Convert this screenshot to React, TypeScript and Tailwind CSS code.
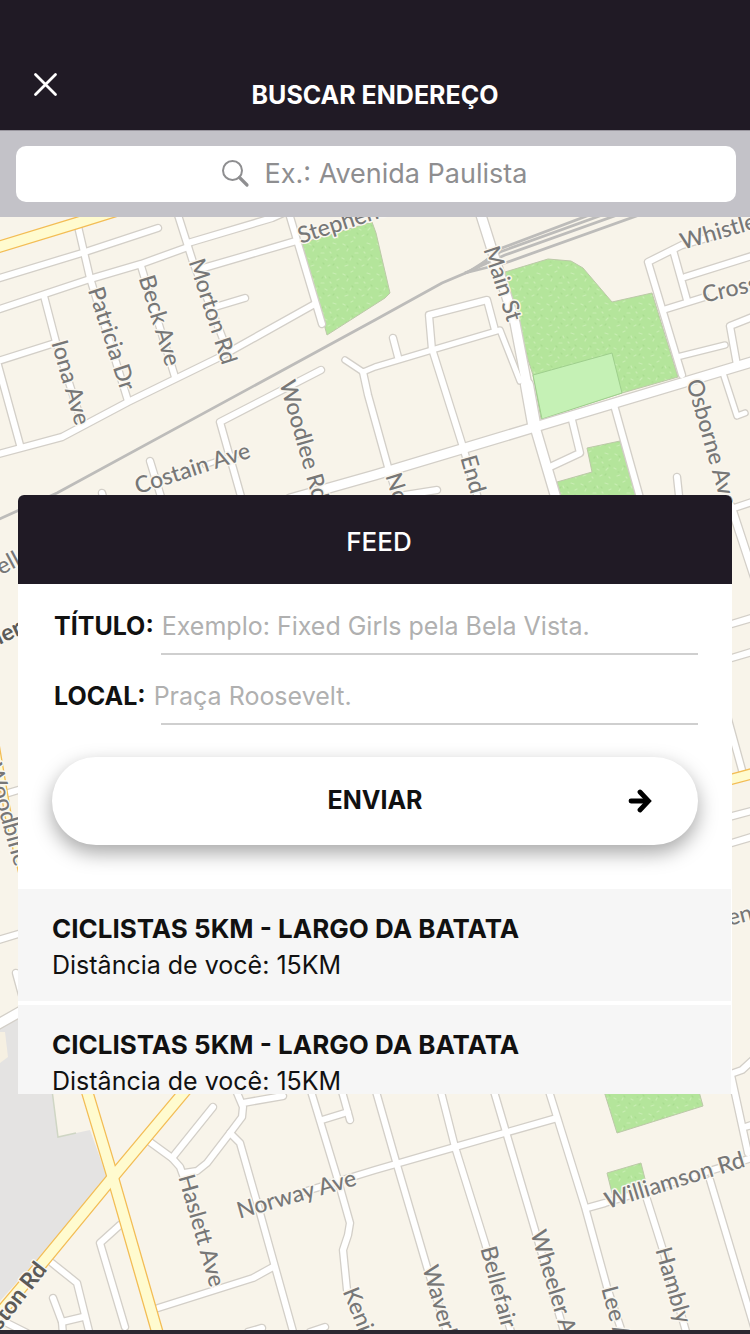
import React from "react";

type Road = { d: string; w?: number };

const ROADS: Road[] = [
  { d: "M0 278L82 253L158 228" },
  { d: "M0 309L90 279L141 264L188 247" },
  { d: "M188 243L272 218L290 210" },
  { d: "M200 269L296 241" },
  { d: "M77 222L90 278L128 401" },
  { d: "M141 266L175 377" },
  { d: "M178 215L193 262L228 352" },
  { d: "M215 307L245 298" },
  { d: "M288 210L322 324" },
  { d: "M-5 455L62 437L128 402L220 357L313 305" },
  { d: "M44 296L56 342L82 423" },
  { d: "M-5 362L55 343" },
  { d: "M-2 365L20 445" },
  { d: "M321 370L220 422L242 500" },
  { d: "M205 465L238 454", w: 4 },
  { d: "M150 461L162 500" },
  { d: "M102 493L104 500" },
  { d: "M345 360L363 372L375 367L432 350L500 330L520 381", w: 5 },
  { d: "M432 350L429 315L487 300L495 330" },
  { d: "M393 338L398 357" },
  { d: "M363 372L368 395L388 467L400 505" },
  { d: "M433 352L463 447L480 505" },
  { d: "M290 499L375 475L535 427L755 361", w: 9 },
  { d: "M480 212L493 253L515 323L535 427L558 505", w: 9 },
  { d: "M527 385L534 424", w: 12 },
  { d: "M572 420L580 453L550 467" },
  { d: "M614 405L642 505" },
  { d: "M682 375L648 262L682 245L720 234" },
  { d: "M673 250L687 300" },
  { d: "M685 277L755 255" },
  { d: "M663 310L705 297" },
  { d: "M677 357L725 345", w: 5 },
  { d: "M737 365L730 326L755 316" },
  { d: "M723 373L737 416L745 413", w: 5 },
  { d: "M677 477L680 505" },
  { d: "M405 495L437 490" },
  { d: "M725 511L755 501" },
  { d: "M731 506L757 585", w: 7 },
  { d: "M725 626L755 617" },
  { d: "M725 660L755 651" },
  { d: "M726 712L742 770" },
  { d: "M725 818L755 810" },
  { d: "M725 845L755 836" },
  { d: "M725 1076L742 1070L755 1058" },
  { d: "M731 1075L748 1153" },
  { d: "M745 1127L755 1124" },
  { d: "M-5 797L25 788" },
  { d: "M-5 941L25 932" },
  { d: "M16 973L22 995" },
  { d: "M-5 1026L25 1009", w: 9 },
  { d: "M150 1142L172 1158L180 1167L184 1178" },
  { d: "M172 1158L213 1107" },
  { d: "M184 1173L197 1171L207 1163L230 1133L242 1117L243 1107L235 1088" },
  { d: "M243 1103L283 1096" },
  { d: "M230 1133L240 1143L260 1213L294 1335" },
  { d: "M158 1308L253 1278L273 1267" },
  { d: "M120 1225L100 1243L125 1327" },
  { d: "M52 1263L77 1283L90 1335" },
  { d: "M53 1298L62 1322L83 1317" },
  { d: "M62 1322L63 1335" },
  { d: "M5 1322L27 1333" },
  { d: "M310 1088L337 1177L350 1223L348 1235L343 1250L347 1290" },
  { d: "M322 1120L348 1112M341 1088L350 1120" },
  { d: "M300 1193L375 1170L455 1147L557 1118" },
  { d: "M375 1088L397 1165L427 1267L448 1335" },
  { d: "M440 1088L455 1147L485 1243L512 1335" },
  { d: "M493 1088L535 1230L565 1335" },
  { d: "M548 1088L585 1207L607 1287L623 1335" },
  { d: "M587 1208L605 1203L755 1157" },
  { d: "M644 1190L662 1247L687 1335" },
  { d: "M710 1180L755 1330" },
  { d: "M248 1332L262 1328M310 1332L325 1327" },
];

const HIGHWAYS: Road[] = [
  { d: "M-5 248L77 223L125 208", w: 10 },
  { d: "M86 1088L113 1178L159 1338", w: 10 },
  { d: "M190 1085L113 1177L43 1262L-5 1319", w: 10 },
  { d: "M725 781L755 773", w: 9 },
  { d: "M-4 745L8 815L26 890", w: 5 },
];

const PARKS = [
  "M302 243L372 222L376 233L390 293L385 298L327 335Z",
  "M505 272L548 259L571 261L583 268L612 302L652 293L678 377L622 393L541 419L533 375L515 320Z",
  "M587 448L620 441L637 500L562 500L557 482L592 472Z",
  "M603 1088L698 1088L703 1106L617 1133Z",
  "M607 1173L641 1163L647 1187L613 1197Z",
];

const RAILS = [
  "M-5 521L57 493L375 320L442 283L475 269L502 248L592 214",
  "M465 273L505 255L620 214",
  "M470 271L500 252L605 214",
  "M465 273L505 263L642 214",
];

type Label = {
  t: string;
  x: number;
  y: number;
  a: number;
  anchor?: "start" | "middle" | "end";
  bold?: boolean;
};

const LABELS: Label[] = [
  { t: "Stephens", x: 299, y: 238, a: -18, anchor: "start" },
  { t: "Iona Ave", x: 69, y: 383, a: 74 },
  { t: "Patricia Dr", x: 110, y: 339, a: 72 },
  { t: "Beck Ave", x: 158, y: 321, a: 73 },
  { t: "Morton Rd", x: 211, y: 312, a: 72 },
  { t: "Costain Ave", x: 193, y: 470, a: -18 },
  { t: "Woodlee Rd", x: 285, y: 381, a: 74, anchor: "start" },
  { t: "No", x: 391, y: 474, a: 73, anchor: "start" },
  { t: "Main St", x: 501, y: 284, a: 72 },
  { t: "End", x: 466, y: 456, a: 74, anchor: "start" },
  { t: "Osborne Ave", x: 692, y: 380, a: 74, anchor: "start" },
  { t: "Whistler", x: 681, y: 244, a: -16, anchor: "start" },
  { t: "Cross", x: 703, y: 297, a: -13, anchor: "start" },
  { t: "Haslett Ave", x: 200, y: 1231, a: 74 },
  { t: "Norway Ave", x: 297, y: 1196, a: -16 },
  { t: "Keni", x: 348, y: 1289, a: 68, anchor: "start" },
  { t: "Waverl", x: 428, y: 1266, a: 74, anchor: "start" },
  { t: "Bellefair", x: 486, y: 1247, a: 75, anchor: "start" },
  { t: "Wheeler A", x: 536, y: 1231, a: 73, anchor: "start" },
  { t: "Lee A", x: 607, y: 1287, a: 75, anchor: "start" },
  { t: "Hambly", x: 661, y: 1248, a: 74, anchor: "start" },
  { t: "Williamson Rd", x: 675, y: 1182, a: -17 },
  { t: "ston Rd", x: 43, y: 1266, a: -52, anchor: "end", bold: true },
  { t: "ell", x: 19, y: 559, a: -28, anchor: "end" },
  { t: "ler", x: 21, y: 628, a: -25, anchor: "end", bold: true },
  { t: "Woodbine", x: 6, y: 815, a: 74 },
  { t: "ens", x: 728, y: 920, a: -14, anchor: "start" },
];

function StreetMap() {
  return (
    <svg
      className="absolute inset-0 h-full w-full"
      viewBox="0 217 750 1113"
      preserveAspectRatio="xMidYMin slice"
      aria-hidden="true"
    >
      <defs>
        <pattern id="grass" width="34" height="30" patternUnits="userSpaceOnUse">
          <rect width="34" height="30" fill="#b4e59b" />
          <path
            d="M3 4l2 1M11 2l2-1M19 6l1 2M27 3l3 1M7 11l1-2M15 13l3 0M24 12l1 1M31 10l2-1M2 18l2 1M10 20l1-2M19 19l2 1M28 20l2-2M5 26l3-1M14 27l1 1M22 26l2-1M31 27l1 1"
            stroke="#c8edb2"
            strokeWidth="1.2"
            strokeLinecap="round"
          />
          <path
            d="M7 6l1 1M16 8l1-1M23 7l1 1M12 16l1 1M6 22l1 0M25 17l1 0M17 23l1 1M27 25l1-1M31 15l1 1"
            stroke="#a9dc90"
            strokeWidth="1.2"
            strokeLinecap="round"
          />
        </pattern>
      </defs>
      <rect x="-400" y="217" width="1550" height="1113" fill="#f8f4ea" />
      <path d="M0 1025L22 1012L22 1088L52 1088L58 1137L90 1130L108 1180L0 1301Z" fill="#e4e3e2" />
      <path d="M0 1032L5 1032L8 1057L0 1063Z" fill="#f6f0e2" />
      <path d="M52 1090L58 1137L76 1133" fill="none" stroke="#cfd6c4" strokeWidth="1.5" />
      {PARKS.map((d) => (
        <path key={d} d={d} fill="url(#grass)" stroke="#bcc9a8" strokeWidth="1" />
      ))}
      <path d="M533 375L612 353L622 393L542 419Z" fill="#c5f1b5" stroke="#9fcf8d" strokeWidth="1" />
      <g fill="none" stroke="#bdbcba" strokeWidth="2.8">
        {RAILS.map((d) => (
          <path key={d} d={d} />
        ))}
      </g>
      <g fill="none" strokeLinecap="round" strokeLinejoin="round">
        {ROADS.map((r) => (
          <path key={r.d} d={r.d} stroke="#d3cfc8" strokeWidth={(r.w ?? 6) + 2.6} />
        ))}
        {ROADS.map((r) => (
          <path key={r.d} d={r.d} stroke="#ffffff" strokeWidth={r.w ?? 6} />
        ))}
        {HIGHWAYS.map((r) => (
          <path key={r.d} d={r.d} stroke="#f3bd55" strokeWidth={(r.w ?? 10) + 2.6} />
        ))}
        {HIGHWAYS.map((r) => (
          <path key={r.d} d={r.d} stroke="#fffbcf" strokeWidth={r.w ?? 10} />
        ))}
      </g>
      <g
        fontFamily="Lato, sans-serif"
        fontSize="23"
        stroke="#faf7f0"
        strokeWidth="3"
        strokeLinejoin="round"
        paintOrder="stroke"
      >
        {LABELS.map((l) => (
          <text
            key={l.t}
            dy="-3"
            textAnchor={l.anchor ?? "middle"}
            dominantBaseline="central"
            fontWeight={l.bold ? 700 : 500}
            fill={l.bold ? "#5c5b58" : "#777777"}
            transform={`translate(${l.x} ${l.y}) rotate(${l.a})`}
          >
            {l.t}
          </text>
        ))}
      </g>
    </svg>
  );
}

function Field({ id, label, placeholder }: { id: string; label: string; placeholder: string }) {
  return (
    <div className="flex h-[70px] flex-col justify-end">
      <div className="flex items-center gap-2 pl-0.5 text-[25px] leading-8 text-[#111111]">
        <label htmlFor={id} className="font-bold">
          {label}
        </label>
        <input
          id={id}
          type="text"
          placeholder={placeholder}
          className="min-w-0 flex-1 bg-transparent outline-none placeholder:text-[#b0b0b0]"
        />
      </div>
      <div className="mt-[11px] ml-[109px] h-0.5 bg-[#cfcfcf]" />
    </div>
  );
}

const EVENTS = [
  { id: 1, title: "CICLISTAS 5KM - LARGO DA BATATA", distance: "15KM" },
  { id: 2, title: "CICLISTAS 5KM - LARGO DA BATATA", distance: "15KM" },
];

export default function App() {
  return (
    <div className="flex min-h-screen flex-col bg-[#f8f4ea] font-['Inter',sans-serif]">
      <header className="grid h-[130px] grid-cols-[1fr_auto_1fr] items-start bg-[#201a25] px-8 pt-[71px] text-white">
        <button type="button" aria-label="Fechar" className="w-7">
          <svg viewBox="0 0 28 28" className="h-7 w-7" fill="none" stroke="currentColor" strokeWidth="2.8" strokeLinecap="round">
            <path d="M3.5 3.5L23.5 23.5M23.5 3.5L3.5 23.5" />
          </svg>
        </button>
        <h1 className="pt-2 text-[25px] leading-8 font-bold">BUSCAR ENDEREÇO</h1>
      </header>

      <div className="border-t border-[#99969e] bg-[#c3c2c8] pt-[15px] pr-3.5 pb-[15px] pl-4">
        <label className="flex h-14 items-center justify-center gap-3.5 rounded-[10px] bg-white pr-1">
          <svg viewBox="0 0 30 30" className="h-[30px] w-[30px] text-[#8e8e90]" fill="none" stroke="currentColor" aria-hidden="true">
            <circle cx="11.5" cy="11.5" r="9.5" strokeWidth="2" />
            <path d="M18.5 18.5L26 26" strokeWidth="3.2" strokeLinecap="round" />
          </svg>
          <input
            type="search"
            aria-label="Buscar endereço"
            placeholder="Ex.: Avenida Paulista"
            className="[field-sizing:content] bg-transparent text-[27px] leading-9 text-[#444444] outline-none placeholder:text-[#8e8e90]"
          />
        </label>
      </div>

      <main className="relative flex-1 overflow-hidden px-[18px] pt-[278px] pb-[236px]">
        <StreetMap />
        <section className="relative overflow-hidden rounded-t-md bg-white">
          <h2 className="bg-[#201a25] pt-[31px] pb-[26px] pl-2 text-center text-[26px] leading-8 font-medium text-white">FEED</h2>
          <form className="px-[34px] pt-px pb-11" onSubmit={(e) => e.preventDefault()}>
            <Field id="titulo" label="TÍTULO:" placeholder="Exemplo: Fixed Girls pela Bela Vista." />
            <Field id="local" label="LOCAL:" placeholder="Praça Roosevelt." />
            <button
              type="submit"
              className="mt-8 grid h-[88px] w-full grid-cols-[1fr_auto_1fr] items-center rounded-full bg-white px-[46px] text-[25px] font-bold text-[#111111] shadow-[0_8px_20px_rgba(0,0,0,0.35)]"
            >
              <span className="col-start-2">ENVIAR</span>
              <svg viewBox="0 0 24 24" className="h-6 w-6 justify-self-end" fill="none" stroke="#000000" strokeWidth="4.8" strokeLinecap="round" strokeLinejoin="miter" aria-hidden="true">
                <path d="M3 12H19" />
                <path d="M12 3L20.5 12L12 21" />
              </svg>
            </button>
          </form>
          <ul className="flex max-h-[205px] flex-col gap-1 overflow-hidden pr-px">
            {EVENTS.map((event) => (
              <li key={event.id} className="shrink-0 bg-[#f6f6f6] px-[34px] pt-6 pb-5 text-[#111111]">
                <h3 className="text-[26px] leading-8 font-bold">{event.title}</h3>
                <p className="mt-1 text-[25px] leading-8">Distância de você: {event.distance}</p>
              </li>
            ))}
          </ul>
        </section>
      </main>
      <div className="h-1 bg-[#2c2730]" />
    </div>
  );
}
